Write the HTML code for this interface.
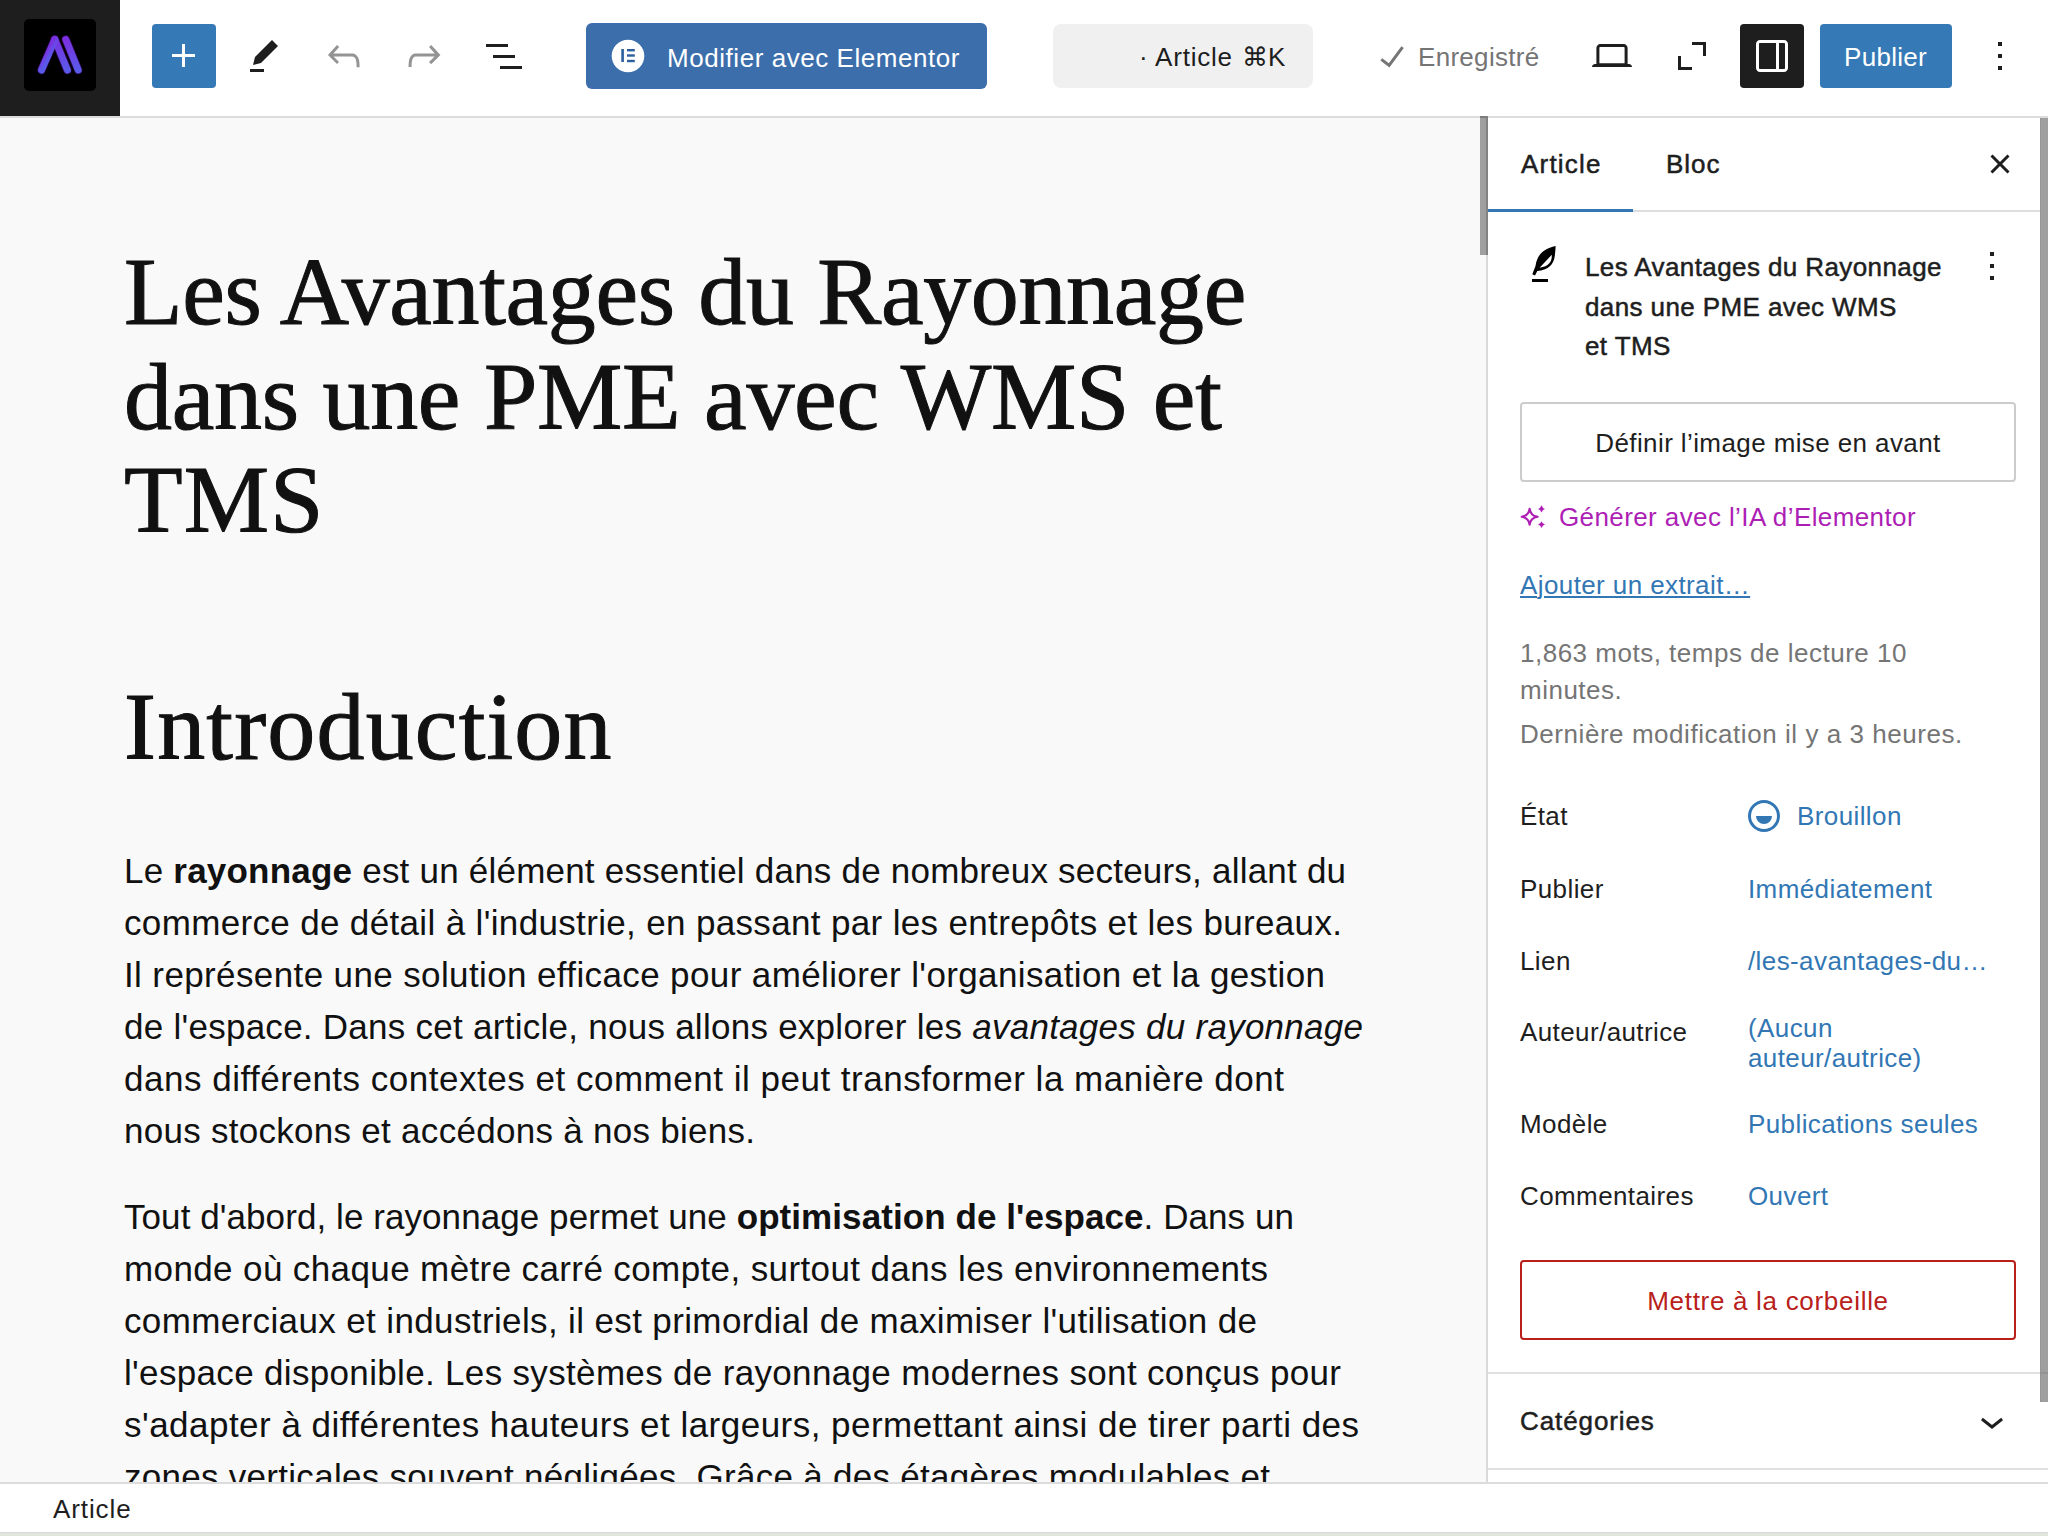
<!DOCTYPE html>
<html><head><meta charset="utf-8">
<style>
*{box-sizing:border-box;margin:0;padding:0}
html,body{width:2048px;height:1536px;overflow:hidden;background:#fff;font-family:"Liberation Sans",sans-serif;color:#1e1e1e}
.abs{position:absolute}
svg{display:block}
/* header */
#hdr{position:absolute;left:0;top:0;width:2048px;height:118px;background:#fff;border-bottom:2px solid #dcdcdc}
#logo{position:absolute;left:0;top:0;width:120px;height:116px;background:#1e1e1e}
#logo .sq{position:absolute;left:24px;top:19px;width:72px;height:72px;background:#000;border-radius:5px}
.ic{position:absolute;width:48px;height:48px;top:32px}
.btn-blue{position:absolute;background:#357ab6;border-radius:4px}
.txt{position:absolute;white-space:nowrap;font-size:26px;line-height:40px}
/* canvas */
#canvas{position:absolute;left:0;top:118px;width:1486px;height:1364px;background:#f9f9f9;overflow:hidden}
.ln{position:absolute;left:124px;white-space:nowrap;font-size:35px;line-height:52px;color:#111}
.tl{position:absolute;left:124px;white-space:nowrap;font-family:"Liberation Serif",serif;font-size:96px;line-height:104px;color:#111;-webkit-text-stroke:1px #111}
/* sidebar */
#side{position:absolute;left:1486px;top:118px;width:562px;height:1364px;background:#fff;border-left:2px solid #dadada;overflow:hidden}
.t26{position:absolute;white-space:nowrap;font-size:26px;line-height:40px;color:#1e1e1e;letter-spacing:0.4px}
.med{-webkit-text-stroke:0.5px currentColor}
#footer{position:absolute;left:0;top:1482px;width:2048px;height:54px;background:#fff;border-top:2px solid #dcdcdc}
</style></head><body>

<div id="hdr">
  <div id="logo"><div class="sq">
    <svg width="72" height="72" viewBox="0 0 72 72">
      <defs>
        <linearGradient id="g1" gradientUnits="userSpaceOnUse" x1="21" y1="33" x2="27" y2="37"><stop offset="0" stop-color="#7a30e2"/><stop offset="1" stop-color="#585ce8"/></linearGradient>
        <linearGradient id="g2" gradientUnits="userSpaceOnUse" x1="31" y1="20" x2="43" y2="51"><stop offset="0" stop-color="#7a30e2"/><stop offset="1" stop-color="#5a5ae8"/></linearGradient>
        <linearGradient id="g3" gradientUnits="userSpaceOnUse" x1="42" y1="20" x2="54" y2="51"><stop offset="0" stop-color="#7a30e2"/><stop offset="1" stop-color="#5a5ae8"/></linearGradient>
      </defs>
      <g stroke-linecap="round" fill="none">
        <line x1="30.8" y1="20.5" x2="43.4" y2="51" stroke="#2a0648" stroke-width="8.6"/>
        <line x1="41.8" y1="20.5" x2="54.2" y2="51" stroke="#2a0648" stroke-width="8.6"/>
        <line x1="17.5" y1="51" x2="30.8" y2="20.5" stroke="#2a0648" stroke-width="8.6"/>
        <line x1="30.8" y1="20.5" x2="43.4" y2="51" stroke="url(#g2)" stroke-width="7"/>
        <line x1="41.8" y1="20.5" x2="54.2" y2="51" stroke="url(#g3)" stroke-width="7"/>
        <line x1="17.5" y1="51" x2="30.8" y2="20.5" stroke="url(#g1)" stroke-width="7"/>
      </g>
    </svg>
  </div></div>

  <div class="btn-blue" style="left:152px;top:24px;width:64px;height:64px">
    <svg class="ic" style="left:8px;top:8px" viewBox="0 0 24 24" width="48" height="48"><path fill="#fff" d="M11 12.5V17.5H12.5V12.5H17.5V11H12.5V6H11V11H6V12.5H11Z"/></svg>
  </div>
  <svg class="ic" style="left:240px" viewBox="0 0 24 24"><path fill="#1e1e1e" d="m19 7-3-3-8.5 8.5-1 4 4-1L19 7Zm-7 11.5H5V20h7v-1.5Z"/></svg>
  <svg class="ic" style="left:320px" viewBox="0 0 24 24"><path fill="#949494" d="M18.3 11.7c-.6-.6-1.4-.9-2.3-.9H6.7l2.9-3.3-1.1-1-4.5 5L8.5 16l1-1-2.7-2.7H16c.5 0 .9.2 1.3.5 1 1 1 3.4 1 4.5v.3h1.5v-.2c0-1.5 0-4.3-1.5-5.7z"/></svg>
  <svg class="ic" style="left:400px" viewBox="0 0 24 24"><path fill="#949494" d="M15.6 6.5l-1.1 1 2.9 3.3H8c-.9 0-1.7.3-2.3.9-1.4 1.5-1.4 4.2-1.4 5.6v.2h1.5v-.3c0-1.1 0-3.5 1-4.5.3-.3.7-.5 1.3-.5h9.2L14.5 15l1.1 1.1 4.6-4.6-4.6-5z"/></svg>
  <svg class="ic" style="left:480px" viewBox="0 0 24 24"><path fill="#1e1e1e" d="M3 6h11v1.5H3V6Zm3.5 5.5h11V13h-11v-1.5ZM21 17H10v1.5h11V17Z"/></svg>

  <div class="abs" style="left:586px;top:23px;width:401px;height:66px;background:#3b6eab;border-radius:6px">
    <svg class="abs" style="left:25px;top:16px" width="34" height="34" viewBox="0 0 34 34"><circle cx="17" cy="17" r="16.3" fill="#fff"/><rect x="10.3" y="10" width="2.6" height="13" fill="#2c5f9e"/><rect x="16" y="10" width="7.8" height="2.4" fill="#2c5f9e"/><rect x="16" y="15.3" width="7.8" height="2.4" fill="#2c5f9e"/><rect x="16" y="20.8" width="7.8" height="2.4" fill="#2c5f9e"/></svg>
    <div class="txt" style="left:81px;top:15px;color:#fff;letter-spacing:0.55px">Modifier avec Elementor</div>
  </div>

  <div class="abs" style="left:1053px;top:24px;width:260px;height:64px;background:#f0f0f0;border-radius:8px">
    <div class="txt" style="left:86px;top:13px;color:#1e1e1e;letter-spacing:0.8px">· Article</div><div class="txt" style="left:189px;top:13px;color:#1e1e1e;letter-spacing:0px">⌘K</div>
  </div>

  <svg class="ic" style="left:1368px" viewBox="0 0 24 24"><path fill="#757575" d="M16.7 7.1l-6.3 8.5-3.3-2.5-.9 1.2 4.5 3.4L17.9 8z"/></svg>
  <div class="txt" style="left:1418px;top:37px;color:#757575;letter-spacing:0.3px">Enregistré</div>

  <svg class="ic" style="left:1588px" viewBox="0 0 24 24"><path fill="#1e1e1e" d="M20.5 16h-.7V8c0-1.1-.9-2-2-2H6.2c-1.1 0-2 .9-2 2v8h-.7c-.8 0-1.5.7-1.5 1.5h20c0-.8-.7-1.5-1.5-1.5zM5.7 8c0-.3.2-.5.5-.5h11.6c.3 0 .5.2.5.5v7.6H5.7V8z"/></svg>
  <svg class="ic" style="left:1668px" viewBox="0 0 24 24"><path fill="#1e1e1e" d="M12 5h7v7h-1.5V6.5H12V5Zm-7 7h1.5v5.5H12V19H5v-7Z"/></svg>

  <div class="abs" style="left:1740px;top:24px;width:64px;height:64px;background:#1e1e1e;border-radius:4px">
    <svg class="ic" style="left:8px;top:8px" viewBox="0 0 24 24"><path fill="#fff" fill-rule="evenodd" d="M18 4H6c-1.1 0-2 .9-2 2v12c0 1.1.9 2 2 2h12c1.1 0 2-.9 2-2V6c0-1.1-.9-2-2-2zm-4 14.5H6c-.3 0-.5-.2-.5-.5V6c0-.3.2-.5.5-.5h8v13zm4.5-.5c0 .3-.2.5-.5.5h-2.5v-13H18c.3 0 .5.2.5.5v12z"/></svg>
  </div>
  <div class="btn-blue" style="left:1820px;top:24px;width:132px;height:64px">
    <div class="txt" style="left:24px;top:13px;color:#fff;letter-spacing:0.3px">Publier</div>
  </div>
  <svg class="ic" style="left:1976px" viewBox="0 0 24 24"><path fill="#1e1e1e" d="M13 19h-2v-2h2v2zm0-6h-2v-2h2v2zm0-6h-2V5h2v2z"/></svg>
</div>

<div id="canvas">
<div class="tl" style="top:122px;letter-spacing:-0.36px">Les Avantages du Rayonnage</div>
<div class="tl" style="top:227px;letter-spacing:-0.3px">dans une PME avec WMS et</div>
<div class="tl" style="top:330px;letter-spacing:1px">TMS</div>
<div class="tl" style="top:557px;letter-spacing:1.18px">Introduction</div>
<div class="ln" style="top:727px;letter-spacing:0.216px">Le <b>rayonnage</b> est un élément essentiel dans de nombreux secteurs, allant du</div>
<div class="ln" style="top:779px;letter-spacing:0.344px">commerce de détail à l'industrie, en passant par les entrepôts et les bureaux.</div>
<div class="ln" style="top:831px;letter-spacing:0.379px">Il représente une solution efficace pour améliorer l'organisation et la gestion</div>
<div class="ln" style="top:883px;letter-spacing:0.262px">de l'espace. Dans cet article, nous allons explorer les <i>avantages du rayonnage</i></div>
<div class="ln" style="top:935px;letter-spacing:0.51px">dans différents contextes et comment il peut transformer la manière dont</div>
<div class="ln" style="top:987px;letter-spacing:0.279px">nous stockons et accédons à nos biens.</div>
<div class="ln" style="top:1073px;letter-spacing:0.074px">Tout d'abord, le rayonnage permet une <b>optimisation de l'espace</b>. Dans un</div>
<div class="ln" style="top:1125px;letter-spacing:0.384px">monde où chaque mètre carré compte, surtout dans les environnements</div>
<div class="ln" style="top:1177px;letter-spacing:0.369px">commerciaux et industriels, il est primordial de maximiser l'utilisation de</div>
<div class="ln" style="top:1229px;letter-spacing:0.331px">l'espace disponible. Les systèmes de rayonnage modernes sont conçus pour</div>
<div class="ln" style="top:1281px;letter-spacing:0.479px">s'adapter à différentes hauteurs et largeurs, permettant ainsi de tirer parti des</div>
<div class="ln" style="top:1333px;letter-spacing:0.283px">zones verticales souvent négligées. Grâce à des étagères modulables et</div>

</div>

<div id="side">
</div>

<!-- sidebar content (page coords) -->
<div class="abs" style="left:1480px;top:116px;width:8px;height:139px;background:#9f9f9f;border-right:2px solid #828282;border-top:2px solid #7c7c7c;z-index:3"></div>

<div class="abs" style="left:1488px;top:210px;width:552px;height:2px;background:#dedede"></div>
<div class="abs" style="left:1488px;top:209px;width:145px;height:3px;background:#3277b4"></div>
<div class="t26 med" style="left:1521px;top:144px;letter-spacing:1.2px">Article</div>
<div class="t26 med" style="left:1666px;top:144px;letter-spacing:1px">Bloc</div>
<svg class="ic" style="left:1976px;top:140px" viewBox="0 0 24 24"><path fill="#1e1e1e" d="M12 13.06l3.712 3.713 1.061-1.06L13.061 12l3.712-3.712-1.06-1.06L12 10.938 8.288 7.227l-1.061 1.06L10.939 12l-3.712 3.712 1.06 1.061L12 13.061z"/></svg>

<svg class="abs" style="left:1520px;top:236px" width="50" height="56" viewBox="0 0 50 56"><path fill="#000" fill-rule="evenodd" d="M35.6 10 C22 13 17 20 15.5 30 L12.3 38.3 L15 39.5 L17.3 35 C28 34 33.5 29 34.8 20 C35.3 16 35.6 12 35.6 10 Z M31.8 18.8 C32 26 29 30 19.6 31.8 Z"/><rect x="12" y="43" width="16" height="3" fill="#000"/></svg>
<div class="t26 med" style="left:1585px;top:247px">Les Avantages du Rayonnage</div>
<div class="t26 med" style="left:1585px;top:287px">dans une PME avec WMS</div>
<div class="t26 med" style="left:1585px;top:326px">et TMS</div>
<svg class="ic" style="left:1968px;top:242px" viewBox="0 0 24 24"><path fill="#1e1e1e" d="M13 19h-2v-2h2v2zm0-6h-2v-2h2v2zm0-6h-2V5h2v2z"/></svg>

<div class="abs" style="left:1520px;top:402px;width:496px;height:80px;border:2px solid #cccccc;border-radius:4px"></div>
<div class="t26" style="left:1520px;top:423px;width:496px;text-align:center">Définir l’image mise en avant</div>

<svg class="abs" style="left:1514px;top:498px" width="40" height="40" viewBox="0 0 40 40"><path fill="none" stroke="#ad1eb5" stroke-width="2.2" stroke-linejoin="round" d="M15.6 10.8 Q16.6 17.7 23.6 18.75 Q16.6 19.8 15.6 26.6 Q14.6 19.8 7.7 18.75 Q14.6 17.7 15.6 10.8 Z"/><path fill="#ad1eb5" d="M27.5 7.3 Q28.4 10 30.9 10.9 Q28.4 11.8 27.5 14.6 Q26.6 11.8 24.1 10.9 Q26.6 10 27.5 7.3 Z M27.5 23.2 Q28.4 25.7 30.9 26.6 Q28.4 27.5 27.5 30 Q26.6 27.5 24.1 26.6 Q26.6 25.7 27.5 23.2 Z"/></svg>
<div class="t26" style="left:1559px;top:497px;color:#ad1eb5">Générer avec l’IA d’Elementor</div>

<div class="t26" style="left:1520px;top:565px;color:#3277b4;text-decoration:underline;text-underline-offset:2px;text-decoration-thickness:2px">Ajouter un extrait…</div>

<div class="t26" style="left:1520px;top:633px;color:#757575;letter-spacing:0.5px">1,863 mots, temps de lecture 10</div>
<div class="t26" style="left:1520px;top:670px;color:#757575;letter-spacing:0.5px">minutes.</div>
<div class="t26" style="left:1520px;top:714px;color:#757575;letter-spacing:0.55px">Dernière modification il y a 3 heures.</div>

<div class="t26" style="left:1520px;top:796px">État</div>
<svg class="abs" style="left:1740px;top:792px" width="48" height="48" viewBox="0 0 48 48"><circle cx="24" cy="24" r="14.5" fill="none" stroke="#3277b4" stroke-width="3"/><path fill="#3277b4" d="M16 24 H32 A8 8 0 0 1 16 24 Z"/></svg>
<div class="t26" style="left:1797px;top:796px;color:#3277b4">Brouillon</div>

<div class="t26" style="left:1520px;top:869px">Publier</div>
<div class="t26" style="left:1748px;top:869px;color:#3277b4">Immédiatement</div>

<div class="t26" style="left:1520px;top:941px">Lien</div>
<div class="t26" style="left:1748px;top:941px;color:#3277b4">/les-avantages-du…</div>

<div class="t26" style="left:1520px;top:1012px">Auteur/autrice</div>
<div class="t26" style="left:1748px;color:#3277b4;line-height:30px;top:1013px">(Aucun<br>auteur/autrice)</div>

<div class="t26" style="left:1520px;top:1104px">Modèle</div>
<div class="t26" style="left:1748px;top:1104px;color:#3277b4">Publications seules</div>

<div class="t26" style="left:1520px;top:1176px">Commentaires</div>
<div class="t26" style="left:1748px;top:1176px;color:#3277b4">Ouvert</div>

<div class="abs" style="left:1520px;top:1260px;width:496px;height:80px;border:2px solid #b8201a;border-radius:4px"></div>
<div class="t26" style="left:1520px;top:1281px;width:496px;text-align:center;color:#b8201a;letter-spacing:0.7px">Mettre à la corbeille</div>

<div class="abs" style="left:1488px;top:1372px;width:552px;height:2px;background:#e0e0e0"></div>
<div class="abs" style="left:2040px;top:118px;width:8px;height:1284px;background:#9f9f9f;border-left:1px solid #959595;z-index:3"></div>
<div class="abs" style="left:2040px;top:1372px;width:8px;height:2px;background:#939393;z-index:4"></div>
<div class="t26 med" style="left:1520px;top:1401px;letter-spacing:0.9px">Catégories</div>
<svg class="ic" style="left:1968px;top:1397px" viewBox="0 0 24 24"><path fill="#1e1e1e" d="M17.5 11.6L12 16l-5.5-4.4.9-1.2L12 14l4.6-3.6z"/></svg>
<div class="abs" style="left:1488px;top:1468px;width:560px;height:2px;background:#e0e0e0"></div>


<div class="abs" style="left:0;top:1532px;width:2048px;height:1px;background:#d6d6d6;z-index:5"></div>
<div class="abs" style="left:0;top:1533px;width:2048px;height:3px;background:#e1e6dd;z-index:5"></div>
<div id="footer">
  <div class="txt" style="left:53px;top:5px;letter-spacing:0.9px">Article</div>
</div>

</body></html>
